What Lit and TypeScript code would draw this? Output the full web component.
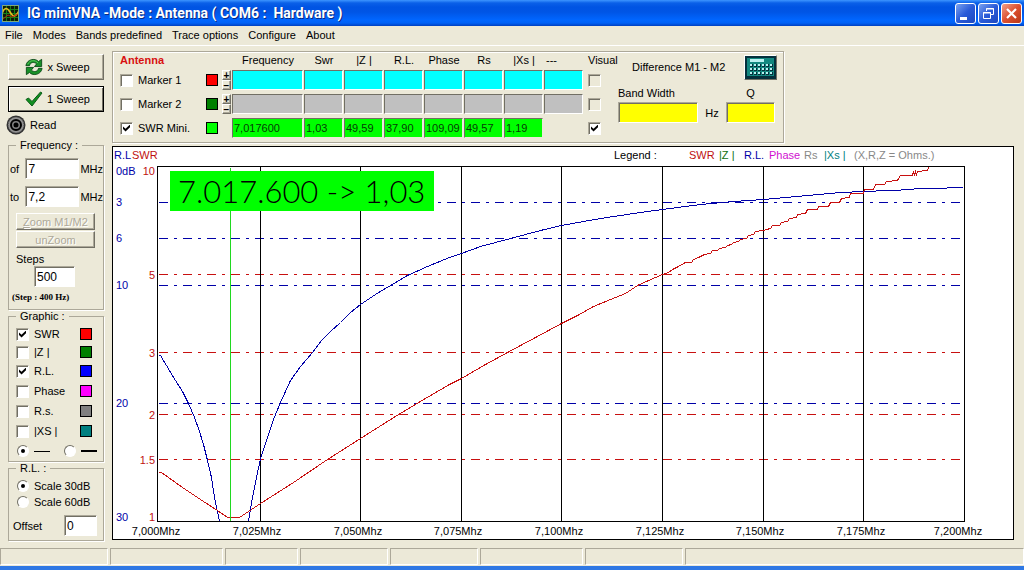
import { LitElement, html, svg, css, nothing } from "lit";
import { customElement } from "lit/decorators.js";

const MENU = ["File", "Modes", "Bands predefined", "Trace options", "Configure", "About"];
const COLUMNS = ["Frequency", "Swr", "|Z |", "R.L.", "Phase", "Rs", "|Xs |", "---"];
const MARKERS = [
  { name: "Marker 1", kind: "cyan", swatch: "red", checked: false, spin: true, visual: false, values: ["", "", "", "", "", "", "", ""] },
  { name: "Marker 2", kind: "grey", swatch: "green", checked: false, spin: true, visual: false, values: ["", "", "", "", "", "", "", ""] },
  { name: "SWR Mini.", kind: "lime", swatch: "lime", checked: true, spin: false, visual: true, values: ["7,017600", "1,03", "49,59", "37,90", "109,09", "49,57", "1,19"] },
];
const TRACES = [
  { name: "SWR", swatch: "red", on: true },
  { name: "|Z |", swatch: "green", on: false },
  { name: "R.L.", swatch: "blue", on: true },
  { name: "Phase", swatch: "magenta", on: false },
  { name: "R.s.", swatch: "gray", on: false },
  { name: "|XS |", swatch: "teal", on: false },
];
const STATUS = ["s110", "s115", "s75", "s90", "s90", "s105", "s100", "rest"];

const GRID_X = [260, 360, 461, 561, 662, 763, 863];
const TICKS = [
  [156, "7,000Mhz"], [257, "7,025Mhz"], [358, "7,050Mhz"], [458, "7,075Mhz"], [559, "7,100Mhz"],
  [660, "7,125Mhz"], [760, "7,150Mhz"], [861, "7,175Mhz"], [958, "7,200Mhz"],
] as [number, string][];
const RL_AXIS = [[171, "0dB"], [202, "3"], [238, "6"], [285, "10"], [403, "20"], [517, "30"]] as [number, string][];
const SWR_AXIS = [[171, "10"], [275, "5"], [353, "3"], [415, "2"], [460, "1.5"], [517, "1"]] as [number, string][];
const RL_LEFT = "158,355 160,355 166,365 175,380 182,391 188,403 194,417 198,428 203,444 207,460 211,477 214,497 219,521";
const RL_RIGHT =
  "248,521 252,497 256,477 260,458 267,437 273,419 280,402 290,380 300,366 312,352 321,340 330,331 340,322 350,312 360,304 375,294 390,285 407,275 427,266 449,257 461,253 480,246 510,238 540,230 561,225 583,221 613,216 640,212 662,209 700,204 733,201 763,199 807,195 840,192 863,191 913,189 914,188 930,188 963,187";
const SWR_LINE =
  "158,472 161,472 182,487 200,499 217,510 227,517 239,517 260,503 293,482 327,459 360,438 398,414 425,398 449,384 461,378 485,364 507,352 535,337 561,323 577,315 593,306 610,299 625,293 637,285 648,280 662,274 668,272 672,269 678,266 685,262 691,262 693,259 698,257 704,254 710,253 712,250 717,250 719,248 725,247 727,245 731,244 733,242 738,241 740,239 746,238 748,235 753,234 755,231 763,230 766,229 770,228 772,225 779,225 781,222 787,221 789,218 796,217 797,214 805,213 807,209 817,209 818,206 828,206 830,202 839,202 841,198 849,197 850,193 863,193 864,189 873,189 875,184 884,184 886,181 897,180 900,175 912,175 913,171 914,175 915,171 916,174 917,171 927,170 928,167";

@customElement("vna-chart")
export class VnaChart extends LitElement {
  static styles = css`
    :host { display: block; box-sizing: border-box; border: 1px solid #000; background: #fff; }
    .plot { display: block; width: 100%; height: auto; font: 11px "Liberation Sans", Arial, sans-serif; }
    .ink { fill: none; stroke-width: 1; shape-rendering: crispEdges; }
    .black { stroke: #000; }
    .navy { stroke: #0000a8; }
    .crimson { stroke: #c81010; }
    .cursor { stroke: #20d820; }
    .dash { stroke-dasharray: 9 6 3 6; }
    .tNavy { fill: #0000a8; }
    .tCrimson { fill: #c01010; }
    .tGreen { fill: #107010; }
    .tMagenta { fill: #d010d0; }
    .tGrey { fill: #888; }
    .tTeal { fill: #008080; }
    .mid { text-anchor: middle; }
    .end { text-anchor: end; }
    .flag { fill: #00ff00; }
    .big { font: 300 31px Lato, "Liberation Sans", sans-serif; }
  `;

  render() {
    return html`<svg class="plot" viewBox="113 147 900 392" role="img" aria-label="SWR and return loss sweep">
      <text class="tNavy" x="114" y="159">R.L</text>
      <text class="tCrimson" x="132" y="159">SWR</text>
      <text x="614" y="159">Legend :</text>
      <text class="tCrimson" x="689" y="159">SWR</text>
      <text class="tGreen" x="719" y="159">|Z |</text>
      <text class="tNavy" x="744" y="159">R.L.</text>
      <text class="tMagenta" x="769" y="159">Phase</text>
      <text class="tGrey" x="804" y="159">Rs</text>
      <text class="tTeal" x="824" y="159">|Xs |</text>
      <text class="tGrey" x="854" y="159">(X,R,Z = Ohms.)</text>
      ${RL_AXIS.map(([y, t]) => svg`<text class="tNavy" x="116" y=${y + 4}>${t}</text>`)}
      ${SWR_AXIS.map(([y, t]) => svg`<text class="tCrimson end" x="155" y=${y + 4}>${t}</text>`)}
      ${TICKS.map(([x, t]) => svg`<text class="mid" x=${x} y="535">${t}</text>`)}
      <g transform="translate(.5 .5)">
        ${[202, 238, 285, 403].map((y) => svg`<path class="ink navy dash" d="M158 ${y}H962"/>`)}
        ${[274, 352, 414, 459].map((y) => svg`<path class="ink crimson dash" d="M158 ${y}H962"/>`)}
        <rect class="ink black" x="157" y="166" width="807" height="355" />
        ${GRID_X.map((x) => svg`<path class="ink black" d="M${x} 166V521"/>`)}
        <polyline class="ink navy" points=${RL_LEFT} />
        <polyline class="ink navy" points=${RL_RIGHT} />
        <polyline class="ink crimson" points=${SWR_LINE} />
        <path class="ink cursor" d="M230 167V520" />
      </g>
      <rect x="168" y="171" width="268" height="40" fill="#fff" />
      <rect class="flag" x="170" y="171" width="264" height="40" />
      <text class="big" x="178" y="203">7.017.600 -&gt; 1,03</text>
    </svg>`;
  }
}

@customElement("app-root")
export class AppRoot extends LitElement {
  static styles = css`
    :host { display: block; font: 11px/14px "Liberation Sans", Arial, sans-serif; color: #000; }
    * { box-sizing: border-box; }
    .window { display: flex; flex-direction: column; min-height: 100vh; background: #ece9d8; border-bottom: 4px solid #2f78e4; }
    .title {
      display: flex; align-items: center; gap: 8px; height: 26px; padding: 0 2px;
      background: linear-gradient(#3d95ff 0, #0a60e8 3px, #0054e3 7px, #0055e5 12px, #0066ff 20px, #0062f6 23px, #0040c0 26px);
      color: #fff; text-shadow: 1px 1px #0a2a80;
    }
    .caption { flex: 1; margin: 0; font: bold 14px/18px Roboto, "Noto Sans", sans-serif; white-space: pre; }
    .controls { display: flex; gap: 2px; }
    .control { width: 21px; height: 21px; padding: 0; border: 1px solid #fff; border-radius: 3px; background: linear-gradient(135deg, #7aa2f0, #2a5bd8 50%, #1c48c0); }
    .close { background: linear-gradient(135deg, #f0a088, #dc5030 50%, #b83818); }
    .glyph { display: block; }
    .menu { display: flex; gap: 10px; height: 20px; padding: 2px 5px 0; border-bottom: 1px solid #fff; }
    .item { padding: 0; border: 0; background: none; font: inherit; line-height: 14px; height: 14px; color: inherit; white-space: nowrap; }
    .main { display: flex; align-items: flex-start; gap: 8px; padding: 5px 10px 0 8px; }
    .side { flex: none; width: 96px; padding-top: 3px; }
    .work { flex: 1; min-width: 0; display: flex; flex-direction: column; align-items: flex-start; gap: 3px; }
    .chart { width: 100%; }

    .btn { font: inherit; color: inherit; background: #ece9d8; border: 1px solid; border-color: #fff #716f64 #716f64 #fff; box-shadow: inset -1px -1px #aca899; padding: 0; }
    .sweep { display: flex; align-items: center; justify-content: center; gap: 4px; width: 100%; height: 26px; padding-left: 3px; margin-bottom: 6px; }
    .default { border-color: #000; box-shadow: inset 1px 1px #fff, inset -1px -1px #716f64; margin-bottom: 3px; }
    .read { display: flex; align-items: center; gap: 4px; height: 20px; margin: 0 0 4px -2px; }
    .group { margin: 0; padding: 0; min-width: 0; border: 1px solid #aca899; box-shadow: 1px 1px #fff; }
    .legend { margin-left: 7px; padding: 0 4px; line-height: 12px; height: 12px; }
    .field {
      width: 54px; height: 21px; padding: 0 2px; font: inherit; font-size: 12px; color: inherit; background: #fff; border-radius: 0;
      border: 1px solid; border-color: #aca899 #fff #fff #aca899; box-shadow: inset 1px 1px #716f64;
    }
    .line { display: flex; align-items: center; height: 21px; margin-top: 7px; }
    .prefix { width: 17px; padding-left: 1px; }
    .unit { padding-left: 1px; }
    .stack { display: flex; flex-direction: column; gap: 1px; padding: 6px 8px 0 7px; }
    .mini { height: 17px; color: #aca899; text-shadow: 1px 1px #fff; }
    .steps { display: block; margin: 4px 7px 0; }
    .stepField { display: block; width: 41px; margin: 0 0 3px 25px; }
    .note { margin: 0; padding: 0 3px 5px; font: bold 9px/14px "Liberation Serif", serif; }
    .trace { display: flex; align-items: center; height: 20px; padding: 0 11px 0 7px; }
    .trace.tight { height: 18px; }
    .first { margin-top: 3px; }
    .name { flex: 1; padding-left: 5px; }
    .swatch { flex: none; display: inline-block; width: 12px; height: 12px; border: 1px solid #000; }
    .swatch.red { background: #f00; }
    .swatch.green { background: #008000; }
    .swatch.lime { background: #0f0; }
    .swatch.blue { background: #00f; }
    .swatch.magenta { background: #f0f; }
    .swatch.gray { background: #808080; }
    .swatch.teal { background: #008080; }
    .check {
      appearance: none; flex: none; width: 13px; height: 13px; margin: 0; background: #fff;
      border: 1px solid; border-color: #aca899 #fff #fff #aca899; box-shadow: inset 1px 1px #716f64;
    }
    .check:checked::before { content: ""; display: block; width: 7px; height: 7px; margin: 2px; background: #000; clip-path: polygon(0 28%, 36% 62%, 100% 0, 100% 40%, 36% 100%, 0 66%); }
    .check.off { background: #ece9d8; }
    .radio {
      appearance: none; flex: none; width: 12px; height: 12px; margin: 0; border-radius: 50%; background: #fff;
      border: 1px solid; border-color: #716f64 #fff #fff #716f64;
    }
    .radio:checked::before { content: ""; display: block; width: 4px; height: 4px; margin: 3px; border-radius: 50%; background: #000; }
    .weights { display: flex; align-items: center; height: 20px; padding-left: 8px; }
    .sample { width: 16px; margin: 0 14px 0 5px; border-top: 1px solid #000; }
    .thick { margin-right: 0; border-top-width: 2px; }
    .scale { display: flex; align-items: center; height: 16px; padding-left: 8px; }
    .scales { padding-top: 4px; }
    .offset { display: flex; align-items: center; justify-content: space-between; height: 21px; margin: 5px 6px 4px 4px; }
    .offsetField { width: 33px; }

    .panel { display: flex; border: 1px solid #aca899; box-shadow: 1px 1px #fff, inset 1px 1px #fff; padding: 0 6px 2px 6px; }
    .readings { border-collapse: collapse; table-layout: fixed; width: 499px; }
    .cLabel { width: 87px; }
    .cSpin { width: 26px; }
    .cFreq { width: 72px; }
    .cVal { width: 40px; }
    .cVisual { width: 34px; }
    th, td { padding: 0; font-weight: normal; text-align: left; height: 24px; }
    .head th { height: 16px; line-height: 16px; text-align: center; }
    .head .antenna { text-align: left; font-weight: bold; color: #d81010; padding-left: 1px; }
    .head .left { text-align: left; padding-left: 2px; }
    .head .visual { text-align: left; padding-left: 4px; }
    .mark { display: flex; align-items: center; gap: 5px; padding-left: 1px; }
    .adjust { display: flex; align-items: center; gap: 4px; }
    .spin { display: flex; flex-direction: column; }
    .tick { width: 9px; height: 10px; font-size: 10px; line-height: 7px; font-weight: bold; }
    .cell { height: 20px; margin-right: 1px; padding-left: 1px; line-height: 18px; border: 1px solid; border-color: #716f64 #fff #fff #716f64; overflow: hidden; }
    .cell.cyan { background: #0ff; }
    .cell.grey { background: #c0c0c0; }
    .cell.lime { background: #0f0; border-color: #716f64 #ece9d8 #ece9d8 #716f64; color: #063c06; }
    .vis { display: flex; padding-left: 4px; }
    .diff { display: flex; flex-direction: column; width: 159px; }
    .diffTop { display: flex; align-items: center; justify-content: space-between; height: 28px; padding: 2px 0 0 14px; margin-bottom: 4px; }
    .calc { width: 33px; height: 25px; }
    .pair { display: grid; grid-template-columns: 80px 28px 49px; align-items: center; }
    .pair label { line-height: 18px; }
    .hz { text-align: center; }
    .qLabel { grid-column: 3; text-align: center; }
    .yellow { background: #ff0; width: 100%; }

    .status { display: flex; gap: 2px; height: 18px; margin-top: auto; }
    .slot { flex: none; height: 17px; border: 1px solid; border-color: #aca899 #fff #fff #aca899; }
    .s110 { width: 108px; }
    .s115 { width: 113px; }
    .s75 { width: 73px; }
    .s90 { width: 88px; }
    .s105 { width: 103px; }
    .s100 { width: 98px; }
    .rest { flex: 1; }
  `;

  private logo() {
    return html`<svg class="glyph" width="17" height="17" viewBox="0 0 17 17" aria-hidden="true">
      <rect width="17" height="17" fill="#0c1c08" />
      <path d="M4.500 0V17M8.500 0V17M12.500 0V17M0 4.500H17M0 8.500H17M0 12.500H17" stroke="#188018" />
      <path d="M0 9C2 2 5 2 8 7S13 13 17 6" fill="none" stroke="#e8b820" stroke-width="1.600" />
      <path d="M1 14L6 10L10 12L16 9" fill="none" stroke="#b02810" />
      <rect x=".5" y=".5" width="16" height="16" fill="none" stroke="#80a878" />
    </svg>`;
  }

  private controls() {
    return html`<div class="controls">
      <button class="control" aria-label="Minimize"><svg class="glyph" width="19" height="19"><rect x="4" y="13" width="7" height="3" fill="#fff" /></svg></button>
      <button class="control" aria-label="Restore"><svg class="glyph" width="19" height="19" fill="none" stroke="#fff"><path d="M7.500 7V4.500H14.500V10.500H12M7 5H15M4.500 8.500H11.500V14.500H4.500ZM4 9H12" /></svg></button>
      <button class="control close" aria-label="Close"><svg class="glyph" width="19" height="19"><path d="M5 5L14 14M14 5L5 14" stroke="#fff" stroke-width="2.200" /></svg></button>
    </div>`;
  }

  private sidebar() {
    return html`<aside class="side">
      <button class="btn sweep">
        <svg class="glyph" width="18" height="18" viewBox="0 0 20 19" aria-hidden="true">
          <path d="M1 8C2 1 11-1 15 3.500L18.500 1V9H10.500L13 6C10 3.500 6 4 5 8Z" fill="#189028" stroke="#0a4a18" />
          <path d="M19 11C18 18 9 20 5 15.500L1.500 18V10H9.500L7 13C10 15.500 14 15 15 11Z" fill="#189028" stroke="#0a4a18" />
          <path d="M3 6.500C5 1.800 11 1 14.500 5" fill="none" stroke="#60d060" />
        </svg>
        x Sweep
      </button>
      <button class="btn sweep default">
        <svg class="glyph" width="18" height="16" viewBox="0 0 18 16" aria-hidden="true">
          <path d="M1 8.500L3.500 7L7 10.500L15.500 1L17 2L7 15Z" fill="#109020" stroke="#0a5a18" />
        </svg>
        1 Sweep
      </button>
      <div class="read">
        <svg class="glyph" width="20" height="20" viewBox="0 0 20 20" aria-hidden="true">
          <circle cx="10" cy="10" r="9.500" fill="#303030" />
          <circle cx="10" cy="10" r="8" fill="#909090" stroke="#484848" stroke-dasharray="1 1" />
          <circle cx="10" cy="10" r="5" fill="#808080" stroke="#000" stroke-width="2" />
          <circle cx="10" cy="10" r="2.500" fill="#000" />
        </svg>
        Read
      </div>
      <fieldset class="group">
        <legend class="legend">Frequency :</legend>
        <div class="line"><label class="prefix" for="from">of</label><input class="field" id="from" value="7" /><span class="unit">MHz</span></div>
        <div class="line"><label class="prefix" for="to">to</label><input class="field" id="to" value="7,2" /><span class="unit">MHz</span></div>
        <div class="stack">
          <button class="btn mini" disabled><u>Z</u>oom M1/M2</button>
          <button class="btn mini" disabled>unZoom</button>
        </div>
        <label class="steps" for="steps">Steps</label>
        <input class="field stepField" id="steps" value="500" />
        <p class="note">(Step : 400 Hz)</p>
      </fieldset>
      <fieldset class="group">
        <legend class="legend">Graphic :</legend>
        ${TRACES.map((t, i) => html`<label class="trace ${i < 2 ? "tight" : ""} ${i === 0 ? "first" : ""}">
          <input class="check" type="checkbox" .checked=${t.on} /><span class="name">${t.name}</span><span class="swatch ${t.swatch}"></span>
        </label>`)}
        <div class="weights">
          <input class="radio" type="radio" name="weight" aria-label="Thin line" checked /><span class="sample"></span>
          <input class="radio" type="radio" name="weight" aria-label="Thick line" /><span class="sample thick"></span>
        </div>
      </fieldset>
      <fieldset class="group">
        <legend class="legend">R.L. :</legend>
        <div class="scales">
          <label class="scale"><input class="radio" type="radio" name="scale" checked /><span class="name">Scale 30dB</span></label>
          <label class="scale"><input class="radio" type="radio" name="scale" /><span class="name">Scale 60dB</span></label>
        </div>
        <div class="offset"><label for="offset">Offset</label><input class="field offsetField" id="offset" value="0" /></div>
      </fieldset>
    </aside>`;
  }

  private readings() {
    return html`<table class="readings">
      <colgroup>
        <col class="cLabel" /><col class="cSpin" /><col class="cFreq" />
        ${COLUMNS.slice(1).map(() => html`<col class="cVal" />`)}
        <col class="cVisual" />
      </colgroup>
      <thead>
        <tr class="head">
          <th class="antenna" colspan="2">Antenna</th>
          ${COLUMNS.map((c) => html`<th class=${c === "---" ? "left" : ""}>${c}</th>`)}
          <th class="visual">Visual</th>
        </tr>
      </thead>
      <tbody>
        ${MARKERS.map((m) => html`<tr>
          <th><label class="mark"><input class="check" type="checkbox" .checked=${m.checked} />${m.name}</label></th>
          <td><div class="adjust"><span class="swatch ${m.swatch}"></span>${m.spin
            ? html`<span class="spin"><button class="btn tick" aria-label="${m.name} up">+</button><button class="btn tick" aria-label="${m.name} down">−</button></span>`
            : nothing}</div></td>
          ${COLUMNS.map((_, i) => html`<td>${i < m.values.length ? html`<div class="cell ${m.kind}">${m.values[i]}</div>` : nothing}</td>`)}
          <td><div class="vis"><input class="check ${m.visual ? "" : "off"}" type="checkbox" aria-label="${m.name} visual" .checked=${m.visual} /></div></td>
        </tr>`)}
      </tbody>
    </table>`;
  }

  private difference() {
    const keys = [0, 1, 2, 3, 4, 5].flatMap((c) => [0, 1, 2].map((r) => [c, r]));
    return html`<div class="diff">
      <div class="diffTop">
        <span>Difference M1 - M2</span>
        <button class="btn calc" aria-label="Calculator">
          <svg class="glyph" width="31" height="23" viewBox="0 0 31 23">
            <rect width="31" height="23" fill="#04303c" />
            <rect x="2" y="2" width="27" height="18" fill="#128880" />
            <rect x="5" y="3" width="14" height="3" fill="#b8f0f0" />
            ${keys.map(([c, r]) => svg`<rect x=${5 + c * 4} y=${8 + r * 4} width="3" height="3" fill="#04303c"/><rect x=${5 + c * 4} y=${8 + r * 4} width="2" height="2" fill="#b8f0f0"/>`)}
          </svg>
        </button>
      </div>
      <div class="pair">
        <label for="bw">Band Width</label><label class="qLabel" for="q">Q</label>
        <input class="field yellow" id="bw" readonly /><span class="hz">Hz</span><input class="field yellow" id="q" readonly />
      </div>
    </div>`;
  }

  render() {
    return html`<div class="window">
      <header class="title">${this.logo()}<h1 class="caption">IG miniVNA -Mode : Antenna ( COM6 :  Hardware )</h1>${this.controls()}</header>
      <nav class="menu">${MENU.map((m) => html`<button class="item">${m}</button>`)}</nav>
      <main class="main">
        ${this.sidebar()}
        <section class="work">
          <div class="panel">${this.readings()}${this.difference()}</div>
          <vna-chart class="chart"></vna-chart>
        </section>
      </main>
      <footer class="status">${STATUS.map((s) => html`<span class="slot ${s}"></span>`)}</footer>
    </div>`;
  }
}
